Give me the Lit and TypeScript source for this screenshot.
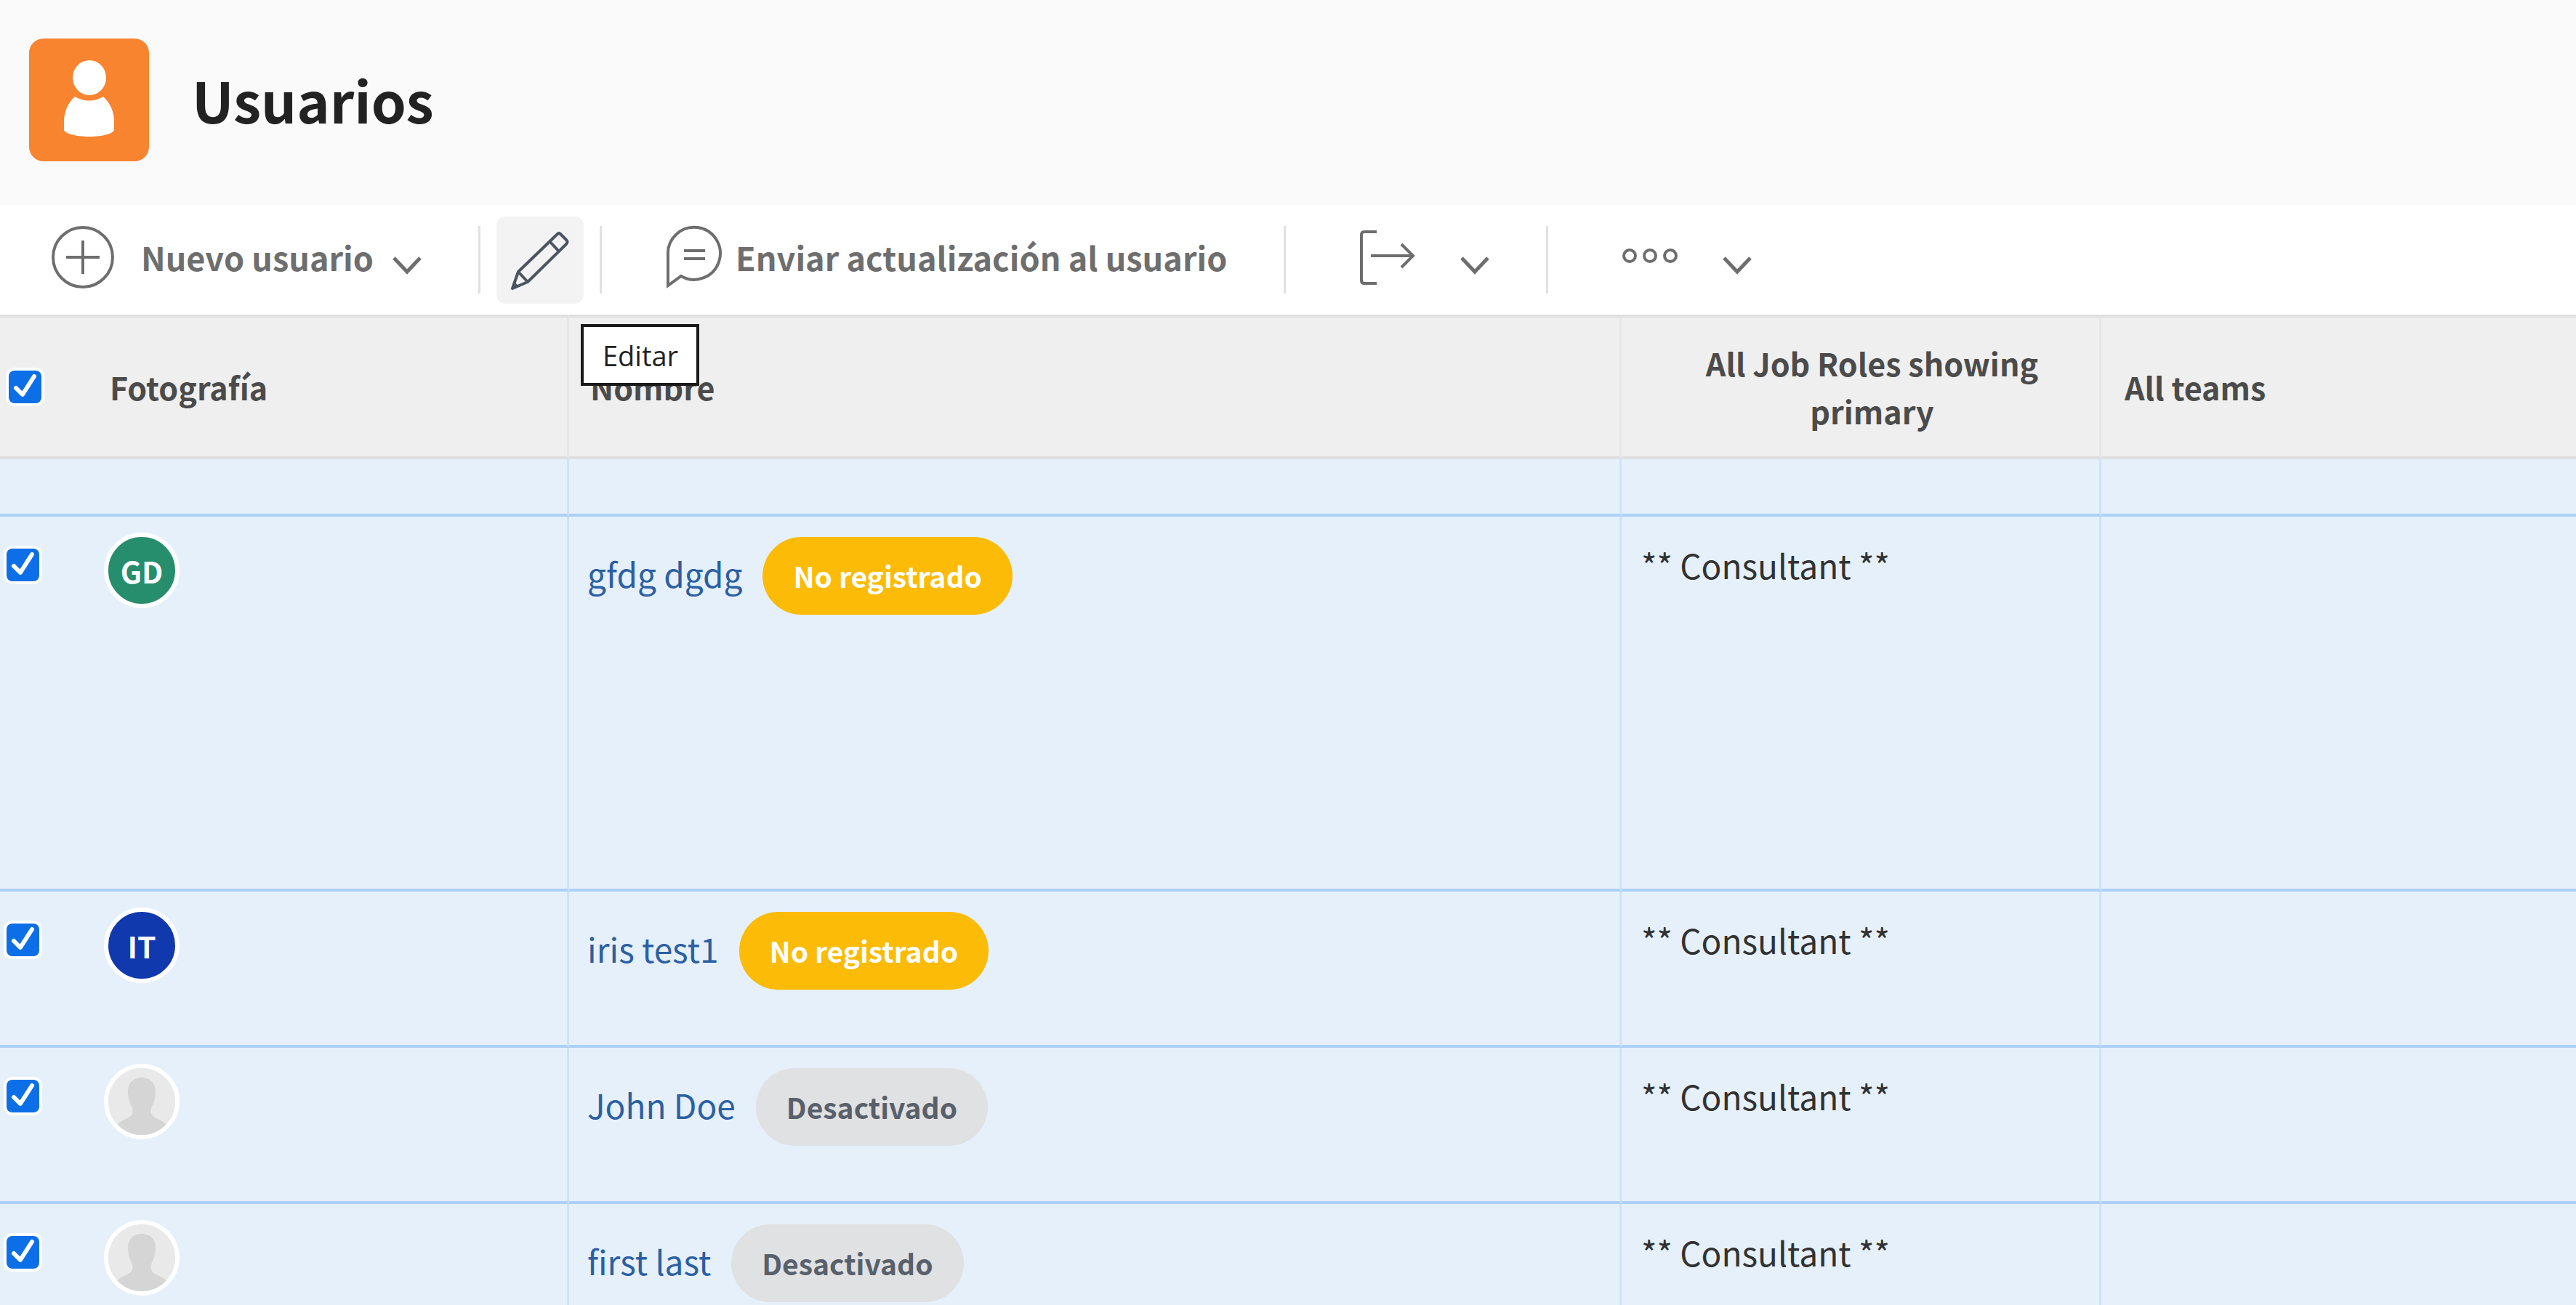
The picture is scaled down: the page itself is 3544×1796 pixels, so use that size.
import { LitElement, html, css, svg, nothing } from "lit";
import { customElement } from "lit/decorators.js";
import { classMap } from "lit/directives/class-map.js";

type User = {
  name: string;
  status: string;
  registered: boolean;
  initials?: string;
  tone?: "green" | "blue";
  role: string;
  tall?: boolean;
};

const USERS: User[] = [
  { name: "gfdg dgdg", status: "No registrado", registered: false, initials: "GD", tone: "green", role: "** Consultant **", tall: true },
  { name: "iris test1", status: "No registrado", registered: false, initials: "IT", tone: "blue", role: "** Consultant **" },
  { name: "John Doe", status: "Desactivado", registered: true, role: "** Consultant **" },
  { name: "first last", status: "Desactivado", registered: true, role: "** Consultant **" },
];

const chevron = html`<svg class="chevron" viewBox="0 0 40 40" aria-hidden="true">
  <path d="M2 17 L20 36 L38 17" />
</svg>`;

const placeholder = svg`
  <rect width="92" height="92" fill="#e9e9e9" />
  <path fill="#d5d5d5" d="M27 32 C27 20 35 13 46 13 C57 13 65 20 65 32 C65 44 61 50 59 55 C57 62 60 66 66 69 C74 73 84 77 88 92 L4 92 C8 77 18 73 26 69 C32 66 35 62 33 55 C31 50 27 44 27 32 Z" />`;

@customElement("app-root")
export class AppRoot extends LitElement {
  static styles = css`
    :host {
      display: block;
      height: 100vh;
      overflow: hidden;
      background: #fff;
      color: #323232;
      font-family: "Noto Sans CJK SC", "Open Sans", sans-serif;
      font-size: 43px;
      line-height: 66px;
    }
    * { box-sizing: border-box; }
    .page { display: flex; flex-direction: column; min-height: 100%; }
    .masthead {
      display: flex;
      align-items: center;
      gap: 58px;
      padding: 52px 40px 60px;
      background: #fafafa;
    }
    .tile { width: 166px; height: 170px; flex: none; display: block; }
    .title { margin: 0; font-size: 77px; line-height: 96px; font-weight: 700; color: #222; }

    .toolbar {
      display: flex;
      align-items: center;
      height: 151px;
      padding-left: 68px;
      color: #6e6e6e;
      font-size: 45px;
    }
    .tool {
      display: flex;
      align-items: center;
      padding: 0;
      border: 0;
      background: none;
      font: inherit;
      font-weight: 700;
      color: inherit;
      white-space: nowrap;
      cursor: pointer;
    }
    .label { padding-bottom: 8px; }
    .label-create { margin: 0 26px 0 30px; }
    .label-update { margin-left: 10px; }
    .icon { width: 96px; height: 96px; flex: none; fill: none; stroke: #6e6e6e; stroke-width: 4; }
    .chevron { width: 40px; height: 40px; flex: none; fill: none; stroke: #6e6e6e; stroke-width: 5; }
    .export, .more { gap: 62px; padding-left: 4px; }
    .divider { width: 3px; height: 93px; margin: 0 78px; background: #e1e1e1; flex: none; }
    .divider.tight { margin: 0 22px 0 78px; }
    .divider.after { margin: 0 78px 0 22px; }
    .edit-wrap { position: relative; }
    .edit { padding: 12px; border-radius: 12px; background: #f3f3f3; }
    .edit .icon { stroke: #4b5462; stroke-width: 4; stroke-linejoin: round; }
    .tip {
      position: absolute;
      left: 116px;
      top: 148px;
      z-index: 2;
      padding: 6px 25px 5px 26px;
      border: 4px solid #1a1a1a;
      background: #fff;
      color: #222;
      font-family: "Open Sans", sans-serif;
      font-size: 38px;
    }

    .grid { width: 100%; border-collapse: separate; border-spacing: 0; table-layout: fixed; flex: 1; }
    .c-check { width: 130px; }
    .c-photo { width: 653px; }
    .c-name { width: 1448px; }
    .c-role { width: 660px; }
    th {
      height: 199px;
      padding: 0 32px 2px;
      border-top: 4px solid #dfdfdf;
      border-bottom: 4px solid #dfdfdf;
      background: #efefef;
      color: #4b4b4b;
      font-weight: 700;
      text-align: left;
      vertical-align: middle;
    }
    th.pick { padding: 0 0 0 12px; }
    th.photo { padding-left: 21px; }
    th.name { padding-left: 29px; }
    th.role { padding-left: 64px; text-align: center; }
    th.line { border-right: 3px solid #e6e6e6; }
    td {
      height: 215px;
      padding: 0 27px;
      border-bottom: 4px solid #acd0f8;
      background: #e5f0fb;
      vertical-align: top;
      font-size: 46px;
    }
    td.line { border-right: 3px solid #cfe2fb; }
    .tall td { height: 516px; }
    .spacer td { height: 79px; }
    td.pick { padding: 44px 0 0 9px; }
    td.photo { padding-top: 22px; padding-left: 13px; }
    td.name { padding-top: 28px; padding-left: 25px; }
    td.role { padding-top: 33px; }

    .check { display: grid; justify-content: start; }
    .check > * { grid-area: 1 / 1; width: 45px; height: 45px; margin: 0; }
    .check input {
      appearance: none;
      border-radius: 8px;
      background: #fff;
      box-shadow: 0 0 0 4px #fff;
    }
    .check input:checked { background: #0d6fe8; }
    .check svg { pointer-events: none; fill: none; stroke: #fff; stroke-width: 6; stroke-linecap: round; stroke-linejoin: round; }

    .avatar {
      display: flex;
      align-items: center;
      justify-content: center;
      width: 104px;
      height: 104px;
      border: 6px solid #fff;
      border-radius: 50%;
      overflow: hidden;
      color: #fff;
      font-size: 41px;
      font-weight: 700;
    }
    .avatar svg { width: 100%; height: 100%; display: block; }
    .green { background: #268e6c; }
    .blue { background: #1139ae; }

    .person { display: flex; align-items: baseline; gap: 28px; }
    .person a { color: #2c5fa3; text-decoration: none; }
    .pill {
      padding: 0 42px;
      border-radius: 54px;
      background: #e0e1e2;
      color: #58606c;
      font-size: 39px;
      line-height: 107px;
      font-weight: 700;
    }
    .pill.pending { background: #fcbb06; color: #fff; }
  `;

  private checkbox(label: string) {
    return html`<span class="check">
      <input type="checkbox" checked aria-label=${label} />
      <svg viewBox="0 0 45 45" aria-hidden="true"><path d="M10 24 L19 33 L35 8" /></svg>
    </span>`;
  }

  private row(u: User) {
    return html`<tr class=${u.tall ? "tall" : ""}>
      <td class="pick">${this.checkbox(u.name)}</td>
      <td class="photo line">
        <span class=${classMap({ avatar: true, green: u.tone === "green", blue: u.tone === "blue" })}>
          ${u.initials ?? html`<svg viewBox="0 0 92 92" aria-hidden="true">${placeholder}</svg>`}
        </span>
      </td>
      <td class="name line">
        <span class="person">
          <a href="#">${u.name}</a>
          <span class=${classMap({ pill: true, pending: !u.registered })}>${u.status}</span>
        </span>
      </td>
      <td class="role line">${u.role}</td>
      <td class="teams">${nothing}</td>
    </tr>`;
  }

  render() {
    return html`<div class="page">
      <header class="masthead">
        <svg class="tile" viewBox="0 0 166 170" aria-hidden="true">
          <rect x="0" y="1" width="165" height="169" rx="20" fill="#f98430" />
          <ellipse cx="83" cy="55" rx="23" ry="24" fill="#fff" />
          <path fill="#fff" d="M63 81 Q83 92 102 81 C112 90 117 102 117 116 L117 126 C117 132 101 136 83 136 C65 136 48 132 48 126 L48 116 C48 102 53 90 63 81 Z" />
        </svg>
        <h1 class="title">Usuarios</h1>
      </header>

      <nav class="toolbar">
        <button class="tool" type="button">
          <svg class="icon" viewBox="0 0 96 96" aria-hidden="true">
            <circle cx="46" cy="44" r="41" />
            <path d="M46 21 V67 M23 44 H69" />
          </svg>
          <span class="label label-create">Nuevo usuario</span>
          ${chevron}
        </button>
        <span class="divider tight"></span>
        <span class="edit-wrap">
          <button class="tool edit" type="button" aria-label="Editar">
            <svg class="icon" viewBox="0 0 96 96" aria-hidden="true">
              <path d="M10 87 L18 64 L72 12 Q74 10 76 12 L84 20 Q87 23 84 26 L31 78 Z" />
              <path d="M18 64 L31 78 M61 22 L74 36 M12 80 L17 85" />
            </svg>
          </button>
          <span class="tip" role="tooltip">Editar</span>
        </span>
        <span class="divider after"></span>
        <button class="tool" type="button">
          <svg class="icon" viewBox="0 0 96 96" aria-hidden="true">
            <path d="M13 83 V41 A36 36 0 1 1 31 70 Z" />
            <path d="M35 35 H64 M35 46 H64" />
          </svg>
          <span class="label label-update">Enviar actualización al usuario</span>
        </button>
        <span class="divider"></span>
        <button class="tool export" type="button" aria-label="Exportar">
          <svg class="icon" viewBox="0 0 96 96" aria-hidden="true">
            <path d="M43 9 H26 Q22 9 22 13 V76 Q22 80 26 80 H43" />
            <path d="M35 42 H93 M77 26 L93 42 L77 58" />
          </svg>
          ${chevron}
        </button>
        <span class="divider"></span>
        <button class="tool more" type="button" aria-label="Más">
          <svg class="icon" viewBox="0 0 96 96" aria-hidden="true">
            <circle cx="30" cy="42" r="8" />
            <circle cx="58" cy="42" r="8" />
            <circle cx="86" cy="42" r="8" />
          </svg>
          ${chevron}
        </button>
      </nav>

      <table class="grid">
        <colgroup>
          <col class="c-check" /><col class="c-photo" /><col class="c-name" /><col class="c-role" /><col />
        </colgroup>
        <thead>
          <tr>
            <th class="pick" scope="col">${this.checkbox("Seleccionar todo")}</th>
            <th class="photo line" scope="col">Fotografía</th>
            <th class="name line" scope="col">Nombre</th>
            <th class="role line" scope="col">All Job Roles showing primary</th>
            <th scope="col">All teams</th>
          </tr>
        </thead>
        <tbody>
          <tr class="spacer">
            <td></td><td class="line"></td><td class="line"></td><td class="line"></td><td></td>
          </tr>
          ${USERS.map((u) => this.row(u))}
        </tbody>
      </table>
    </div>`;
  }
}
